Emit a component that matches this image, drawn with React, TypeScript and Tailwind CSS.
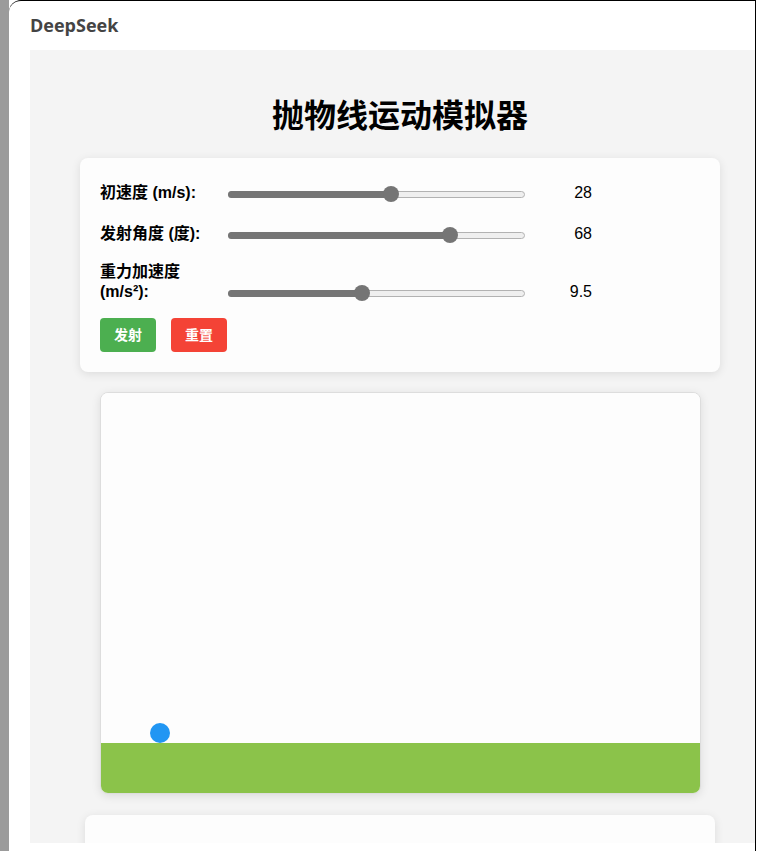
import React from "react";

const font = { fontFamily: '"Liberation Sans", Arial, "Noto Sans CJK SC", sans-serif' };

type SliderProps = { label: React.ReactNode; value: string; fraction: number; className?: string };

const Slider = ({ label, value, fraction, className }: SliderProps) => {
  const pos = 8 + 281 * fraction;
  return (
    <div className={`flex items-end ${className ?? ""}`}>
      <div className="w-[128px] text-base leading-5 font-bold text-black">{label}</div>
      <div className="relative h-4 w-[297px] mb-[1px]">
        <div className="absolute left-0 right-0 top-[4.5px] h-[7px] rounded-full border border-[#b2b2b2] bg-[#efefef]" />
        <div
          className="absolute left-0 top-[4.5px] h-[7px] rounded-full bg-[#757575]"
          style={{ width: pos }}
        />
        <div
          className="absolute top-0 h-4 w-4 rounded-full bg-[#757575]"
          style={{ left: pos - 8 }}
        />
      </div>
      <div className="w-[67px] text-right text-base leading-5 text-black">{value}</div>
    </div>
  );
};

const App = () => {
  return (
    <div className="h-[851px] w-[758px] overflow-hidden bg-white border-l-[9px] border-[#9b9b9b]" style={font}>
      <div className="flex h-full w-[747px] flex-col overflow-hidden rounded-tl-[12px] border-t border-r border-black bg-white">
        <div className="h-[49px] shrink-0 pl-[21px] pt-[11px]">
          <span
            className="text-[18px] font-bold text-[#444]"
            style={{ fontFamily: '"Open Sans", "Noto Sans", sans-serif' }}
          >
            DeepSeek
          </span>
        </div>
        <div className="ml-[21px] mb-[8px] flex-1 overflow-hidden bg-[#f4f4f4]">
          <div className="flex w-[740px] flex-col items-center">
            <h1 className="mt-[46px] text-[32px] leading-10 font-bold text-black">抛物线运动模拟器</h1>

            <div className="mt-[22px] w-[640px] rounded-lg bg-[#fdfdfd] px-5 pt-[25px] pb-5 shadow-[0_2px_10px_rgba(0,0,0,0.1)]">
              <Slider label="初速度 (m/s):" value="28" fraction={27 / 49} className="mb-[21px]" />
              <Slider label="发射角度 (度):" value="68" fraction={68.5 / 90} className="mb-[18px]" />
              <Slider
                label={
                  <>
                    重力加速度
                    <br />
                    (m/s²):
                  </>
                }
                value="9.5"
                fraction={8.5 / 19}
              />
              <div className="mt-[16px] flex gap-[15px]">
                <button className="h-[34px] rounded bg-[#4caf50] px-[14px] text-sm font-bold text-white">发射</button>
                <button className="h-[34px] rounded bg-[#f44336] px-[14px] text-sm font-bold text-white">重置</button>
              </div>
            </div>

            <div className="mt-[20px] w-[601px] overflow-hidden rounded-lg border border-[#dddddd] bg-[#fdfdfd] shadow-[0_2px_10px_rgba(0,0,0,0.1)]">
              <svg width="599" height="400" viewBox="0 0 599 400" className="block">
                <rect x="0" y="0" width="599" height="400" fill="#fdfdfd" />
                <rect x="0" y="350" width="599" height="50" fill="#8bc34a" />
                <circle cx="59" cy="340" r="10" fill="#2196f3" />
              </svg>
            </div>

            <div className="mt-[21px] h-[120px] w-[630px] rounded-lg bg-[#fdfdfd] shadow-[0_2px_10px_rgba(0,0,0,0.1)]" />
          </div>
        </div>
      </div>
    </div>
  );
};

export default App;
